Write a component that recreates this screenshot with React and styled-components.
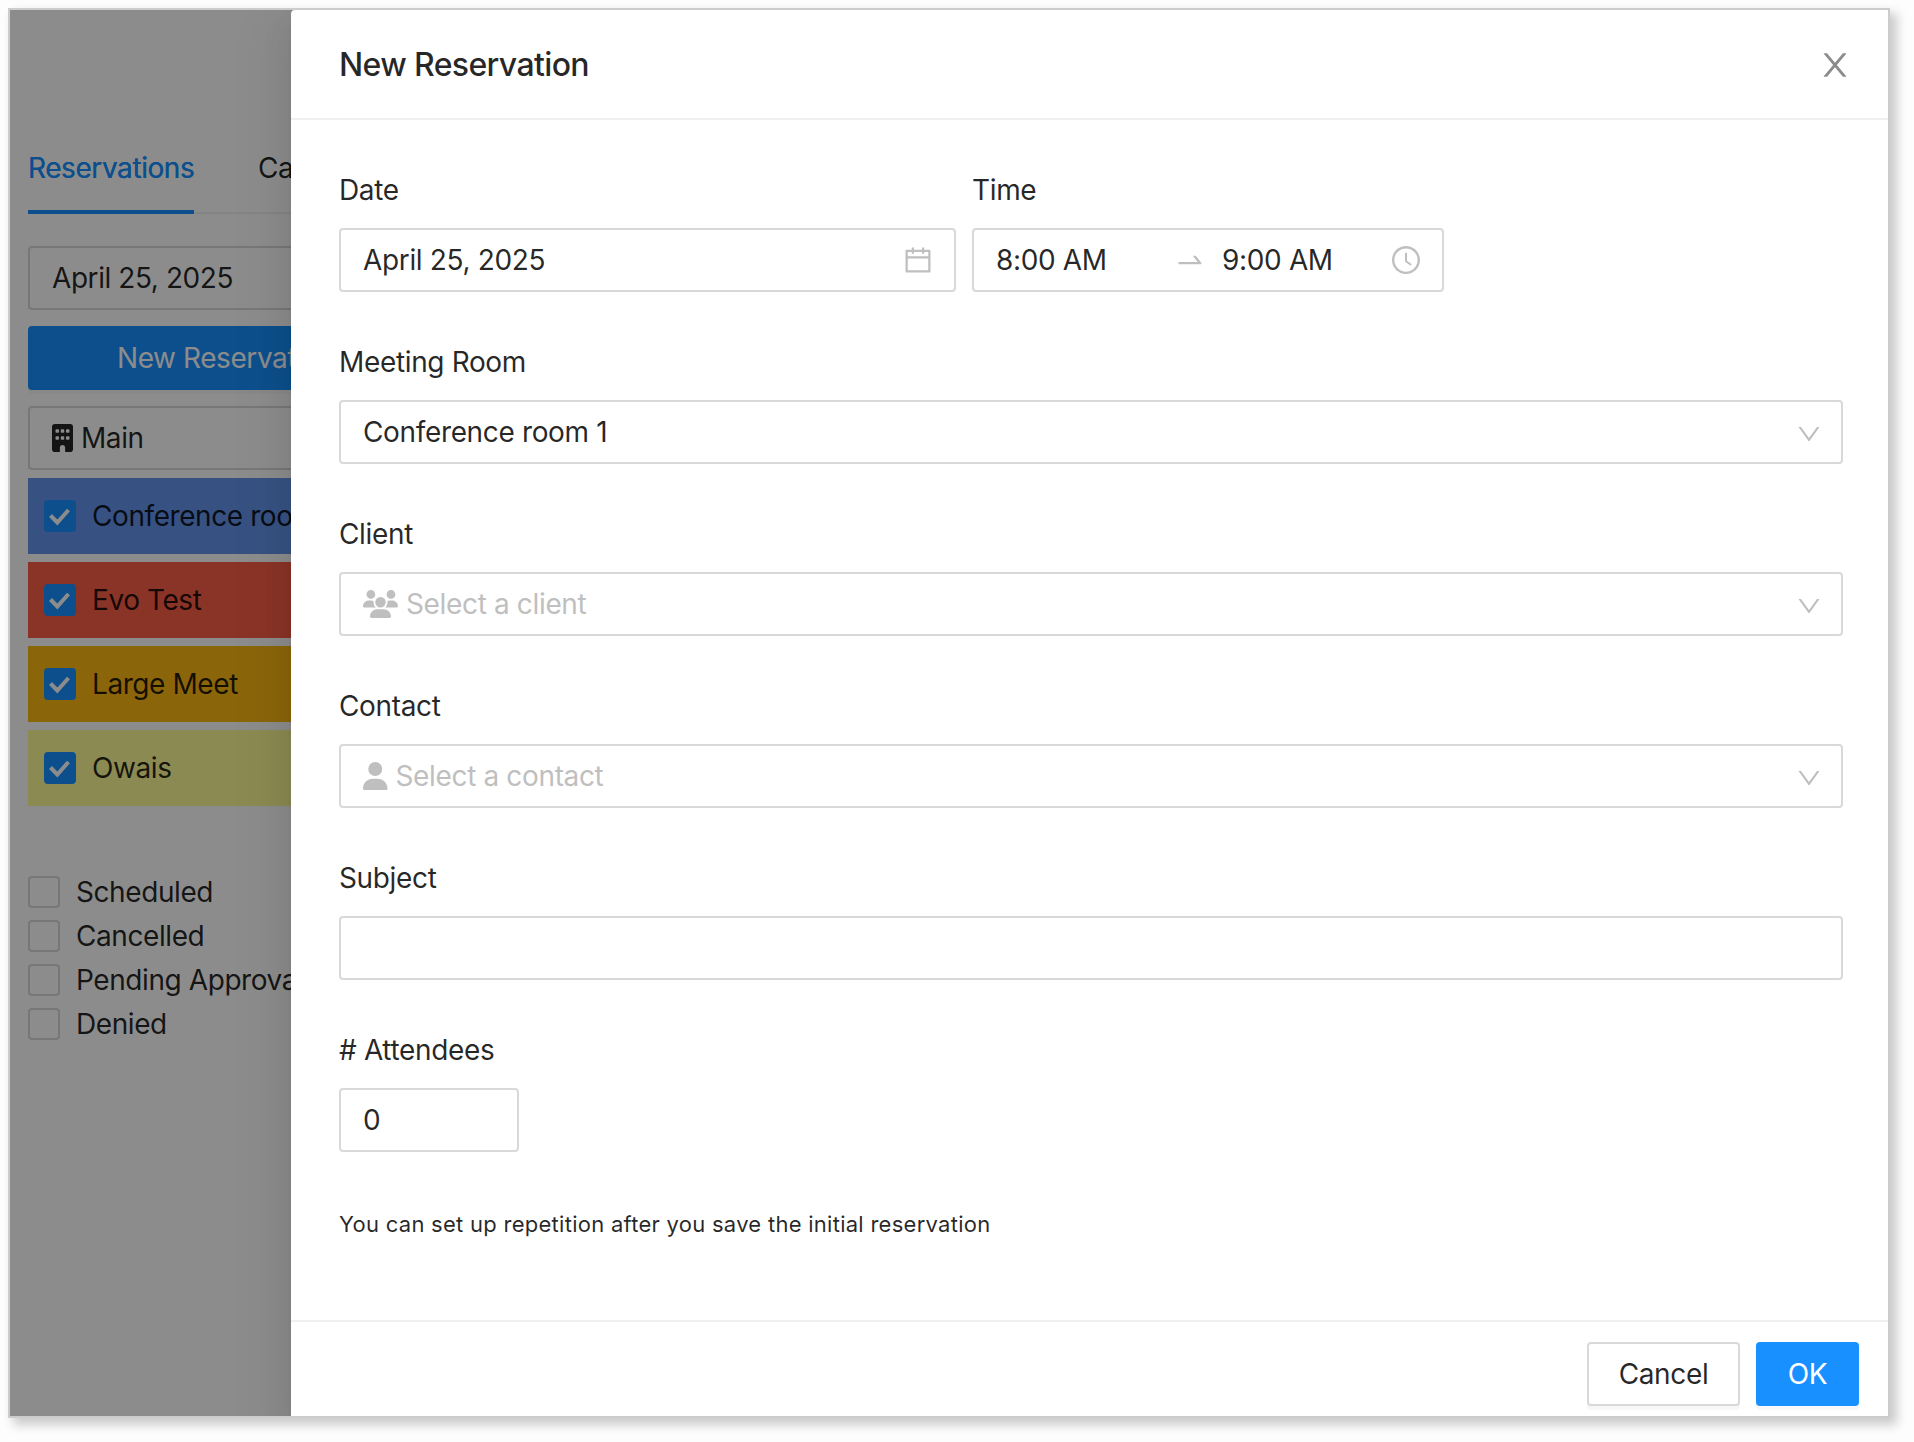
import React from "react";
import styled, { createGlobalStyle } from "styled-components";
import {
  AiOutlineCalendar,
  AiOutlineClockCircle,
  AiOutlineDown,
  AiOutlineSwapRight,
} from "react-icons/ai";
import { FaBuilding, FaUser, FaUsers } from "react-icons/fa6";

const GlobalStyle = createGlobalStyle`
  * {
    box-sizing: border-box;
  }

  body {
    margin: 0;
    background: #fdfdfd;
    color: rgba(0, 0, 0, 0.85);
    font-family: Inter, "Liberation Sans", sans-serif;
    font-size: 28px;
    line-height: 44px;
    letter-spacing: -0.35px;
  }

  svg {
    display: block;
    flex: none;
  }
`;

const Page = styled.div`
  height: 1442px;
  padding: 8px;
  overflow: hidden;
`;

const Window = styled.div`
  width: 1882px;
  height: 1410px;
  border: 2px solid #cccccc;
  background: #fff;
  box-shadow: 6px 6px 10px 1px rgba(0, 0, 0, 0.2);
`;

const Viewport = styled.div`
  position: relative;
  width: 100%;
  height: 100%;
  overflow: hidden;
`;

/* page behind the modal */

const Sidebar = styled.aside`
  width: 285px;
  padding: 130px 0 0 18px;
  overflow: hidden;
  white-space: nowrap;
  letter-spacing: -0.42px;
`;

const SidebarInner = styled.div`
  width: 396px;
`;

const Tabs = styled.nav`
  display: flex;
  gap: 64px;
  height: 74px;
  margin-bottom: 32px;
  box-shadow: inset 0 -2px 0 #f0f0f0;
`;

const Tab = styled.span`
  width: ${(p) => p.$width || "auto"};
  padding-top: 6px;
  color: ${(p) => (p.$active ? "#1890ff" : "inherit")};
  border-bottom: 4px solid ${(p) => (p.$active ? "#1890ff" : "transparent")};
  text-shadow: ${(p) => (p.$active ? "0 0 0.5px currentColor" : "none")};
`;

const Stack = styled.div`
  display: flex;
  flex-direction: column;
  gap: ${(p) => p.$gap};
  margin-bottom: ${(p) => p.$bottom || 0};
`;

const Field = styled.div`
  display: flex;
  align-items: center;
  gap: ${(p) => p.$gap || "0"};
  width: ${(p) => p.$width || "100%"};
  height: 64px;
  padding: 0 20px 0 22px;
  color: ${(p) => (p.$placeholder ? "#bfbfbf" : "inherit")};
  border: 2px solid #d9d9d9;
  border-radius: 4px;
`;

const Value = styled.span`
  flex: ${(p) => p.$flex || "1"};
  padding-left: ${(p) => p.$indent || "0"};
`;

const Button = styled.button`
  width: ${(p) => p.$width};
  height: 64px;
  padding: 0;
  font: inherit;
  letter-spacing: inherit;
  color: ${(p) => (p.$primary ? "#fff" : "inherit")};
  background: ${(p) => (p.$primary ? "#1890ff" : "#fff")};
  border: 2px solid ${(p) => (p.$primary ? "#1890ff" : "#d9d9d9")};
  border-radius: 4px;
  box-shadow: 0 4px 0 rgba(0, 0, 0, 0.03);
`;

const Room = styled.label`
  display: flex;
  align-items: center;
  gap: 16px;
  height: 76px;
  padding: 0 16px;
  background: ${(p) => p.$color};
`;

const Filter = styled.label`
  display: flex;
  align-items: center;
  gap: 16px;
  height: 44px;
`;

const Box = styled.span`
  display: grid;
  place-items: center;
  width: 32px;
  height: 32px;
  background: ${(p) => (p.$checked ? "#1890ff" : "#fff")};
  border: 2px solid ${(p) => (p.$checked ? "#1890ff" : "#d9d9d9")};
  border-radius: 4px;
`;

/* modal */

const Mask = styled.div`
  position: absolute;
  inset: 0;
  background: rgba(0, 0, 0, 0.45);
`;

const Modal = styled.section`
  position: absolute;
  top: 0;
  left: 281px;
  display: flex;
  flex-direction: column;
  width: 1600px;
  height: 1410px;
  background: #fff;
  border-radius: 4px;
  box-shadow: 0 6px 12px -8px rgba(0, 0, 0, 0.12),
    0 12px 32px 0 rgba(0, 0, 0, 0.08), 0 18px 56px 16px rgba(0, 0, 0, 0.05);
`;

const Header = styled.header`
  display: flex;
  align-items: center;
  justify-content: space-between;
  height: 110px;
  padding: 2px 40px 0 48px;
  border-bottom: 2px solid #f0f0f0;
`;

const Title = styled.h1`
  margin: 0;
  font-size: 32px;
  font-weight: 500;
  letter-spacing: -0.63px;
`;

const Body = styled.div`
  display: flex;
  flex-direction: column;
  gap: 48px;
  height: 1200px;
  padding: 48px;
`;

const Row = styled.div`
  display: flex;
  gap: 16px;
`;

const Item = styled.div`
  display: flex;
  flex-direction: column;
  gap: 16px;
  width: ${(p) => p.$width || "100%"};
`;

const Arrow = styled(AiOutlineDown)`
  width: 28px;
  height: 28px;
  margin: 3px -2px 0 0;
  color: #bfbfbf;
`;

const Hint = styled.p`
  margin: 0;
  padding-top: 2px;
  font-size: 22px;
  letter-spacing: 0.27px;
`;

const Footer = styled.footer`
  display: flex;
  justify-content: flex-end;
  gap: 16px;
  height: 100px;
  padding: 20px 32px 0;
  border-top: 2px solid #f0f0f0;
`;

const rooms = [
  { name: "Conference room 1", color: "#6495ed" },
  { name: "Evo Test", color: "#fc5f47" },
  { name: "Large Meet", color: "#fdb913" },
  { name: "Owais", color: "#fdfb96" },
];

const filters = ["Scheduled", "Cancelled", "Pending Approval", "Denied"];

function Checkbox({ checked }) {
  return (
    <Box $checked={checked}>
      {checked && (
        <svg width="24" height="24" viewBox="0 0 24 24" fill="none">
          <path d="M2.5 11.5 9.3 18.5 20.5 6" stroke="#fff" strokeWidth="4" />
        </svg>
      )}
    </Box>
  );
}

function CloseIcon() {
  return (
    <svg width="32" height="32" viewBox="64 64 896 896" fill="#8c8c8c">
      <path d="M563.8 512l262.5-312.9c4.4-5.2.7-13.1-6.1-13.1h-79.8c-4.7 0-9.2 2.1-12.3 5.7L511.6 449.8 295.1 191.7c-3-3.6-7.5-5.7-12.3-5.7H203c-6.8 0-10.5 7.9-6.1 13.1L459.4 512 196.9 824.9A7.95 7.95 0 0 0 203 838h79.8c4.7 0 9.2-2.1 12.3-5.7l216.5-258.1 216.5 258.1c3 3.6 7.5 5.7 12.3 5.7h79.8c6.8 0 10.5-7.9 6.1-13.1L563.8 512z" />
    </svg>
  );
}

function FormItem({ label, width, children }) {
  return (
    <Item $width={width}>
      <span>{label}</span>
      {children}
    </Item>
  );
}

function Background() {
  return (
    <Sidebar>
      <SidebarInner>
        <Tabs>
          <Tab $active $width="166px">Reservations</Tab>
          <Tab>Calendar</Tab>
        </Tabs>
        <Stack $gap="16px" $bottom="8px">
          <Field>
            <Value>April 25, 2025</Value>
          </Field>
          <Button $primary $width="100%">New Reservation</Button>
          <Field $gap="8px">
            <FaBuilding size={28} style={{ width: 21 }} />
            <Value>Main</Value>
          </Field>
        </Stack>
        <Stack $gap="8px" $bottom="64px">
          {rooms.map((room) => (
            <Room key={room.name} $color={room.color}>
              <Checkbox checked />
              {room.name}
            </Room>
          ))}
        </Stack>
        {filters.map((name) => (
          <Filter key={name}>
            <Checkbox />
            {name}
          </Filter>
        ))}
      </SidebarInner>
    </Sidebar>
  );
}

function ReservationModal() {
  return (
    <Modal>
      <Header>
        <Title>New Reservation</Title>
        <CloseIcon />
      </Header>
      <Body>
        <Row>
          <FormItem label="Date" width="617px">
            <Field>
              <Value>April 25, 2025</Value>
              <AiOutlineCalendar size={32} color="#bfbfbf" />
            </Field>
          </FormItem>
          <FormItem label="Time" width="472px">
            <Field>
              <Value $flex="0 0 178px">8:00 AM</Value>
              <AiOutlineSwapRight size={32} color="#bfbfbf" />
              <Value $indent="16px">9:00 AM</Value>
              <AiOutlineClockCircle size={32} color="#bfbfbf" />
            </Field>
          </FormItem>
        </Row>
        <FormItem label="Meeting Room">
          <Field>
            <Value>Conference room 1</Value>
            <Arrow />
          </Field>
        </FormItem>
        <FormItem label="Client">
          <Field $placeholder $gap="8px">
            <FaUsers size={35} style={{ height: 28 }} />
            <Value>Select a client</Value>
            <Arrow />
          </Field>
        </FormItem>
        <FormItem label="Contact">
          <Field $placeholder $gap="8px">
            <FaUser size={28} style={{ width: 24.5 }} />
            <Value>Select a contact</Value>
            <Arrow />
          </Field>
        </FormItem>
        <FormItem label="Subject">
          <Field />
        </FormItem>
        <FormItem label="# Attendees">
          <Field $width="180px">
            <Value>0</Value>
          </Field>
        </FormItem>
        <Hint>You can set up repetition after you save the initial reservation</Hint>
      </Body>
      <Footer>
        <Button $width="153px">Cancel</Button>
        <Button $primary $width="103px">OK</Button>
      </Footer>
    </Modal>
  );
}

export default function App() {
  return (
    <>
      <GlobalStyle />
      <Page>
        <Window>
          <Viewport>
            <Background />
            <Mask />
            <ReservationModal />
          </Viewport>
        </Window>
      </Page>
    </>
  );
}
